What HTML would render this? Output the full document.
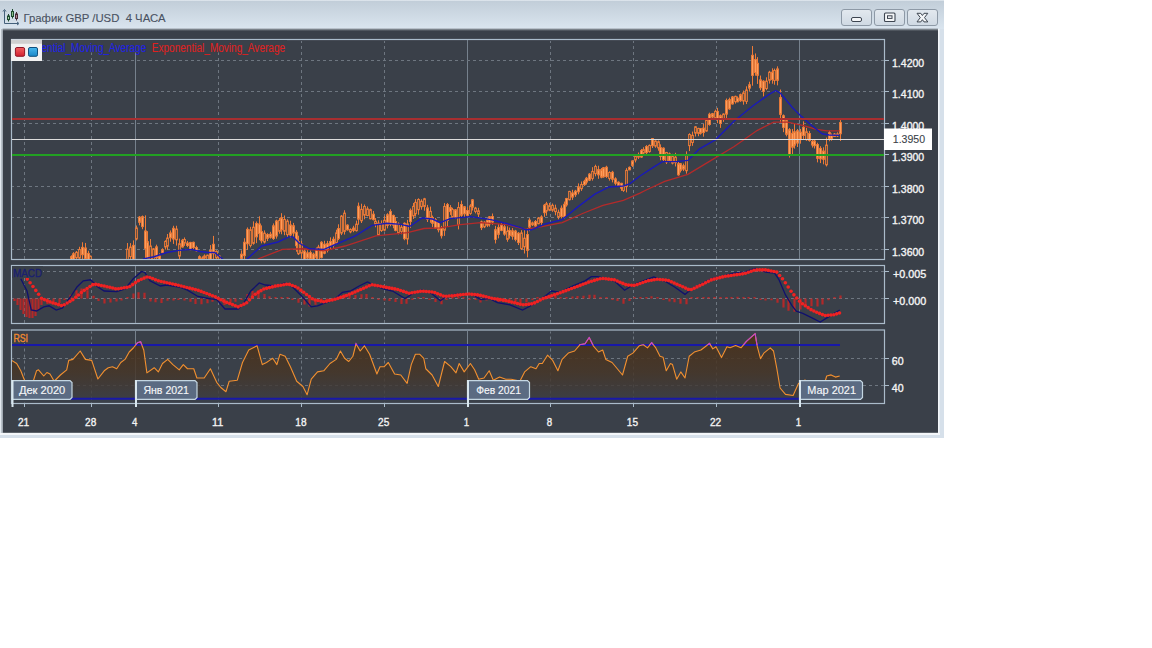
<!DOCTYPE html><html><head><meta charset="utf-8"><style>html,body{margin:0;padding:0;background:#fff;width:1152px;height:648px;overflow:hidden}svg{display:block;font-family:"Liberation Sans",sans-serif}</style></head><body>
<svg width="1152" height="648" viewBox="0 0 1152 648">
<defs><linearGradient id="tb" x1="0" y1="0" x2="0" y2="1"><stop offset="0" stop-color="#e8eef4"/><stop offset="0.05" stop-color="#c2ced9"/><stop offset="1" stop-color="#dae5ef"/></linearGradient><linearGradient id="btn" x1="0" y1="0" x2="0" y2="1"><stop offset="0" stop-color="#e3e9ef"/><stop offset="1" stop-color="#cfd9e3"/></linearGradient><linearGradient id="rsif" gradientUnits="userSpaceOnUse" x1="0" y1="333" x2="0" y2="399"><stop offset="0" stop-color="#4c3016" stop-opacity="0.88"/><stop offset="0.6" stop-color="#463628" stop-opacity="0.85"/><stop offset="1" stop-color="#3c3d42" stop-opacity="0.8"/></linearGradient><linearGradient id="sh" x1="0" y1="0" x2="0" y2="1"><stop offset="0" stop-color="#d6e0ea"/><stop offset="0.5" stop-color="#7a828a"/><stop offset="1" stop-color="#3a4049"/></linearGradient><linearGradient id="gr" x1="0" y1="0" x2="0" y2="1"><stop offset="0" stop-color="#f46060"/><stop offset="1" stop-color="#d02030"/></linearGradient><linearGradient id="gb" x1="0" y1="0" x2="0" y2="1"><stop offset="0" stop-color="#48b8ee"/><stop offset="1" stop-color="#1a86c6"/></linearGradient><clipPath id="cm"><rect x="12" y="40" width="872" height="219"/></clipPath><clipPath id="cmacd"><rect x="12" y="266" width="872" height="57"/></clipPath><clipPath id="crsi"><rect x="12" y="331" width="872" height="72"/></clipPath><clipPath id="cabove"><rect x="12" y="300" width="872" height="45"/></clipPath></defs>
<rect x="0" y="0" width="944" height="438" fill="#d6e0ea"/>
<rect x="0" y="0" width="944" height="29" fill="url(#tb)"/>
<rect x="2.6" y="28" width="935.4" height="3" fill="url(#sh)"/>
<rect x="2.6" y="31" width="935.4" height="402" fill="#3a4049"/>
<rect x="938" y="29" width="1.5" height="405" fill="#f4f7fa"/>
<rect x="0" y="432.8" width="940" height="2.2" fill="#f4f7fa"/>
<rect x="0" y="29" width="1.3" height="404" fill="#e4eaf0"/>
<rect x="1.3" y="29" width="1.3" height="404" fill="#aab2ba"/>
<g fill="none" stroke-width="1"><path d="M4.5 10.5 V23.5 H18" stroke="#44607a"/><path d="M3 11.5 L4.5 9.5 L6 11.5" stroke="#44607a"/><path d="M17 22 L19 23.5 L17 25" stroke="#44607a"/></g><line x1="8.5" y1="14" x2="8.5" y2="21.5" stroke="#1e4a2e"/><rect x="7.5" y="16" width="2" height="3.6" fill="#a8d0a8" stroke="#1e4a2e" stroke-width="1"/><line x1="12.5" y1="9" x2="12.5" y2="18.5" stroke="#1e4a2e"/><rect x="11.5" y="11.5" width="2" height="5" fill="#8cc08c" stroke="#1e4a2e" stroke-width="1"/><line x1="16.5" y1="12" x2="16.5" y2="20.5" stroke="#4a2a36"/><rect x="15.5" y="14" width="2" height="4.5" fill="#b08894" stroke="#4a2a36" stroke-width="1"/>
<text x="23.5" y="22" font-size="11.8" fill="#4a5262" textLength="142" lengthAdjust="spacingAndGlyphs" stroke="#4a5262" stroke-width="0.12">График GBP /USD&#160; 4 ЧАСА</text>
<rect x="841.5" y="9.5" width="30" height="16" rx="2.5" fill="url(#btn)" stroke="#8d99a6" stroke-width="1"/>
<rect x="874.5" y="9.5" width="30" height="16" rx="2.5" fill="url(#btn)" stroke="#8d99a6" stroke-width="1"/>
<rect x="907.5" y="9.5" width="30" height="16" rx="2.5" fill="url(#btn)" stroke="#8d99a6" stroke-width="1"/>
<rect x="851.5" y="17.5" width="10" height="4" rx="1.5" fill="#f4f6f8" stroke="#3d4550" stroke-width="1"/>
<rect x="884.5" y="13" width="10.5" height="8.5" rx="1" fill="#f4f6f8" stroke="#3d4550" stroke-width="1.1"/><rect x="887.5" y="15.8" width="4.5" height="2.6" fill="#f4f6f8" stroke="#3d4550" stroke-width="1"/>
<path d="M917 13.3 L920.8 13.3 L922.4 15.5 L924 13.3 L927.8 13.3 L924.5 17.6 L927.8 21.9 L924 21.9 L922.4 19.7 L920.8 21.9 L917 21.9 L920.3 17.6 Z" fill="#f4f6f8" stroke="#3d4550" stroke-width="1" stroke-linejoin="round"/>
<rect x="11.5" y="39.5" width="873" height="220" fill="none" stroke="#aabbca" stroke-width="1.2"/>
<rect x="11.5" y="265.5" width="873" height="58" fill="none" stroke="#aabbca" stroke-width="1.2"/>
<rect x="11.5" y="330" width="873" height="73.5" fill="none" stroke="#aabbca" stroke-width="1.2"/>
<line x1="24.5" y1="41" x2="24.5" y2="259" stroke="#6e7680" stroke-width="1" stroke-dasharray="3,3" stroke-dashoffset="1"/>
<line x1="24.5" y1="267" x2="24.5" y2="323" stroke="#6e7680" stroke-width="1" stroke-dasharray="3,3" stroke-dashoffset="1"/>
<line x1="24.5" y1="331.5" x2="24.5" y2="403" stroke="#6e7680" stroke-width="1" stroke-dasharray="3,3" stroke-dashoffset="1"/>
<line x1="91.5" y1="41" x2="91.5" y2="259" stroke="#6e7680" stroke-width="1" stroke-dasharray="3,3" stroke-dashoffset="1"/>
<line x1="91.5" y1="267" x2="91.5" y2="323" stroke="#6e7680" stroke-width="1" stroke-dasharray="3,3" stroke-dashoffset="1"/>
<line x1="91.5" y1="331.5" x2="91.5" y2="403" stroke="#6e7680" stroke-width="1" stroke-dasharray="3,3" stroke-dashoffset="1"/>
<line x1="135.5" y1="40" x2="135.5" y2="259" stroke="#76818d" stroke-width="1"/>
<line x1="135.5" y1="266" x2="135.5" y2="323" stroke="#76818d" stroke-width="1"/>
<line x1="135.5" y1="330.5" x2="135.5" y2="403" stroke="#76818d" stroke-width="1"/>
<line x1="218.5" y1="41" x2="218.5" y2="259" stroke="#6e7680" stroke-width="1" stroke-dasharray="3,3" stroke-dashoffset="1"/>
<line x1="218.5" y1="267" x2="218.5" y2="323" stroke="#6e7680" stroke-width="1" stroke-dasharray="3,3" stroke-dashoffset="1"/>
<line x1="218.5" y1="331.5" x2="218.5" y2="403" stroke="#6e7680" stroke-width="1" stroke-dasharray="3,3" stroke-dashoffset="1"/>
<line x1="301.5" y1="41" x2="301.5" y2="259" stroke="#6e7680" stroke-width="1" stroke-dasharray="3,3" stroke-dashoffset="1"/>
<line x1="301.5" y1="267" x2="301.5" y2="323" stroke="#6e7680" stroke-width="1" stroke-dasharray="3,3" stroke-dashoffset="1"/>
<line x1="301.5" y1="331.5" x2="301.5" y2="403" stroke="#6e7680" stroke-width="1" stroke-dasharray="3,3" stroke-dashoffset="1"/>
<line x1="384.5" y1="41" x2="384.5" y2="259" stroke="#6e7680" stroke-width="1" stroke-dasharray="3,3" stroke-dashoffset="1"/>
<line x1="384.5" y1="267" x2="384.5" y2="323" stroke="#6e7680" stroke-width="1" stroke-dasharray="3,3" stroke-dashoffset="1"/>
<line x1="384.5" y1="331.5" x2="384.5" y2="403" stroke="#6e7680" stroke-width="1" stroke-dasharray="3,3" stroke-dashoffset="1"/>
<line x1="467.5" y1="40" x2="467.5" y2="259" stroke="#76818d" stroke-width="1"/>
<line x1="467.5" y1="266" x2="467.5" y2="323" stroke="#76818d" stroke-width="1"/>
<line x1="467.5" y1="330.5" x2="467.5" y2="403" stroke="#76818d" stroke-width="1"/>
<line x1="550.5" y1="41" x2="550.5" y2="259" stroke="#6e7680" stroke-width="1" stroke-dasharray="3,3" stroke-dashoffset="1"/>
<line x1="550.5" y1="267" x2="550.5" y2="323" stroke="#6e7680" stroke-width="1" stroke-dasharray="3,3" stroke-dashoffset="1"/>
<line x1="550.5" y1="331.5" x2="550.5" y2="403" stroke="#6e7680" stroke-width="1" stroke-dasharray="3,3" stroke-dashoffset="1"/>
<line x1="633.5" y1="41" x2="633.5" y2="259" stroke="#6e7680" stroke-width="1" stroke-dasharray="3,3" stroke-dashoffset="1"/>
<line x1="633.5" y1="267" x2="633.5" y2="323" stroke="#6e7680" stroke-width="1" stroke-dasharray="3,3" stroke-dashoffset="1"/>
<line x1="633.5" y1="331.5" x2="633.5" y2="403" stroke="#6e7680" stroke-width="1" stroke-dasharray="3,3" stroke-dashoffset="1"/>
<line x1="716.5" y1="41" x2="716.5" y2="259" stroke="#6e7680" stroke-width="1" stroke-dasharray="3,3" stroke-dashoffset="1"/>
<line x1="716.5" y1="267" x2="716.5" y2="323" stroke="#6e7680" stroke-width="1" stroke-dasharray="3,3" stroke-dashoffset="1"/>
<line x1="716.5" y1="331.5" x2="716.5" y2="403" stroke="#6e7680" stroke-width="1" stroke-dasharray="3,3" stroke-dashoffset="1"/>
<line x1="799.5" y1="40" x2="799.5" y2="259" stroke="#76818d" stroke-width="1"/>
<line x1="799.5" y1="266" x2="799.5" y2="323" stroke="#76818d" stroke-width="1"/>
<line x1="799.5" y1="330.5" x2="799.5" y2="403" stroke="#76818d" stroke-width="1"/>
<line x1="12" y1="60.5" x2="884" y2="60.5" stroke="#6e7680" stroke-dasharray="3,3" stroke-dashoffset="1"/>
<line x1="884" y1="60.5" x2="889" y2="60.5" stroke="#aabbca"/>
<line x1="12" y1="91.5" x2="884" y2="91.5" stroke="#6e7680" stroke-dasharray="3,3" stroke-dashoffset="1"/>
<line x1="884" y1="91.5" x2="889" y2="91.5" stroke="#aabbca"/>
<line x1="12" y1="123.5" x2="884" y2="123.5" stroke="#6e7680" stroke-dasharray="3,3" stroke-dashoffset="1"/>
<line x1="884" y1="123.5" x2="889" y2="123.5" stroke="#aabbca"/>
<line x1="12" y1="154.5" x2="884" y2="154.5" stroke="#6e7680" stroke-dasharray="3,3" stroke-dashoffset="1"/>
<line x1="884" y1="154.5" x2="889" y2="154.5" stroke="#aabbca"/>
<line x1="12" y1="186.5" x2="884" y2="186.5" stroke="#6e7680" stroke-dasharray="3,3" stroke-dashoffset="1"/>
<line x1="884" y1="186.5" x2="889" y2="186.5" stroke="#aabbca"/>
<line x1="12" y1="217.5" x2="884" y2="217.5" stroke="#6e7680" stroke-dasharray="3,3" stroke-dashoffset="1"/>
<line x1="884" y1="217.5" x2="889" y2="217.5" stroke="#aabbca"/>
<line x1="12" y1="249.5" x2="884" y2="249.5" stroke="#6e7680" stroke-dasharray="3,3" stroke-dashoffset="1"/>
<line x1="884" y1="249.5" x2="889" y2="249.5" stroke="#aabbca"/>
<line x1="12" y1="271.5" x2="884" y2="271.5" stroke="#6e7680" stroke-dasharray="3,3" stroke-dashoffset="1"/>
<line x1="884" y1="271.5" x2="889" y2="271.5" stroke="#aabbca"/>
<line x1="12" y1="298.5" x2="884" y2="298.5" stroke="#6e7680" stroke-dasharray="3,3" stroke-dashoffset="1"/>
<line x1="884" y1="298.5" x2="889" y2="298.5" stroke="#aabbca"/>
<line x1="12" y1="358.5" x2="884" y2="358.5" stroke="#6e7680" stroke-dasharray="3,3" stroke-dashoffset="1"/>
<line x1="884" y1="358.5" x2="889" y2="358.5" stroke="#aabbca"/>
<line x1="12" y1="385.5" x2="884" y2="385.5" stroke="#6e7680" stroke-dasharray="3,3" stroke-dashoffset="1"/>
<line x1="884" y1="385.5" x2="889" y2="385.5" stroke="#aabbca"/>
<g clip-path="url(#cm)">
<path d="M71.5 255.29V260.42M73.5 252.15V261.61M76.5 251.02V259.89M79.5 246.79V261.2M82.5 242.25V261.3M85.5 242.95V261.29M88.5 250.78V261.96M90.5 255.52V261.6M127.5 243.02V263.09M130.5 243.13V261.39M133.5 240.4V261.17M136.5 225.51V240.44M139.5 216.07V225.31M142.5 215.49V229.22M145.5 215.38V261.88M147.5 231.17V261.98M150.5 239.06V262.08M153.5 248.05V261.01M156.5 244.68V261.96M159.5 253.41V261.56M162.5 248.35V253.39M165.5 240.22V249.55M167.5 234.03V249.79M170.5 230.46V241.73M173.5 225.78V243.94M176.5 225.75V245.58M179.5 238.63V261.52M182.5 238.9V247.6M184.5 237.45V245.83M187.5 240.95V247.08M190.5 241.85V250.14M193.5 241.61V249.35M196.5 245.71V251.6M199.5 255.34V261.08M202.5 256.39V261.72M204.5 254.38V259.26M207.5 254.71V261.94M210.5 245.08V261.54M213.5 235.92V261.23M216.5 250.28V261.24M219.5 254.97V261.26M241.5 250.43V261.91M244.5 238.22V261.21M247.5 227.44V249.87M250.5 226.85V247.41M253.5 221.37V244.68M256.5 221.47V243.13M259.5 216.28V240.16M261.5 225.4V243.34M264.5 230.38V243.41M267.5 233.21V241.03M270.5 231.85V238.59M273.5 223.43V239.89M276.5 219.69V238.67M279.5 217.87V233.67M281.5 213.19V234.29M284.5 215.48V235.21M287.5 219.26V237.06M290.5 220.74V237.6M293.5 222.9V237.22M296.5 230.07V251.7M298.5 235.69V254.97M301.5 240.93V258.42M304.5 249V261.7M307.5 250.28V261.61M310.5 250.51V260.23M313.5 252.68V261.75M316.5 247.53V260.2M318.5 244.84V261.16M321.5 241.18V258.43M324.5 240.74V254.27M327.5 240.87V252.44M330.5 237.36V249.47M333.5 236.62V247.71M336.5 229.69V244.91M338.5 224.31V240.09M341.5 215.04V235.1M344.5 210.26V234.58M347.5 224.27V230.62M350.5 228.37V233.28M353.5 225.78V232.2M356.5 220.59V231.55M358.5 202.59V224.74M361.5 203.71V223M364.5 204.47V219.27M367.5 206.47V216.26M370.5 208.61V219.37M373.5 211.04V220.44M375.5 218.06V227.26M378.5 220.25V235.77M381.5 220.39V231.95M384.5 215.92V231.34M387.5 213.24V228.4M390.5 209.25V226.26M393.5 214.55V228.3M395.5 217.05V231.34M398.5 222.41V234.34M401.5 224.03V234.29M404.5 222.38V240.23M407.5 219.83V244.51M410.5 208.48V227.82M413.5 202.95V218.94M415.5 199.19V216.56M418.5 198.31V214.75M421.5 199.25V209.66M424.5 197.86V210.71M427.5 204.87V222.03M430.5 206.59V222.75M432.5 215.57V226.98M435.5 218V228.68M438.5 221.91V232.39M441.5 225.85V238.5M444.5 203.08V235.91M447.5 202.96V227.04M450.5 205.08V214.94M452.5 207.79V217.76M455.5 209.13V218.66M458.5 202.12V229.38M461.5 200.67V216.85M464.5 205.97V217.09M467.5 207.21V216.67M470.5 204.17V214.78M472.5 199.17V210.5M475.5 206.82V213.39M478.5 207.8V216.99M481.5 220.61V230.09M484.5 221.31V228.12M487.5 218.19V227.06M489.5 216.15V226.67M492.5 213.53V224.77M495.5 225.87V243.44M498.5 224.06V238.39M501.5 223.11V231.22M504.5 222.87V235.74M507.5 226.33V241.75M509.5 227.55V238.67M512.5 228.05V239.68M515.5 229.86V241.33M518.5 232.07V245.06M521.5 230.21V249.88M524.5 230.15V253.5M527.5 228.23V257.38M529.5 218.16V231.2M532.5 221.61V226.01M535.5 220.02V226.58M538.5 217.03V224.2M541.5 215.27V225.25M544.5 203.94V216.91M546.5 201.86V215.67M549.5 202.93V211.1M552.5 203.49V211.84M555.5 204.66V215.29M558.5 209.62V219.37M561.5 205.46V218.36M564.5 201.55V218.86M566.5 197.84V206.7M569.5 190.8V200.38M572.5 189.77V199.88M575.5 189.85V196.93M578.5 183.4V194.27M581.5 181.5V190.92M584.5 179.66V185.9M586.5 176.92V184.56M589.5 173.03V181.01M592.5 167.19V180.61M595.5 164.7V176.32M598.5 165.74V178.8M601.5 168V178.28M603.5 167.12V177.78M606.5 165.76V177.97M609.5 171.26V180.64M612.5 170.85V182.38M615.5 177.26V185.39M618.5 181.34V186.63M621.5 182.77V190.86M623.5 185.03V191.88M626.5 168.19V192.35M629.5 166.46V170.16M632.5 160.35V167.02M635.5 154.37V162.39M638.5 152.52V158.96M641.5 148.95V157.78M643.5 147.26V155.78M646.5 145.13V154.1M649.5 144.48V152.7M652.5 138.01V148.03M655.5 140.25V147.82M658.5 140.44V150.71M660.5 144.34V160.27M663.5 147.27V161.01M666.5 151.89V164.01M669.5 152.5V162.31M672.5 153.84V164.42M675.5 152.82V166.43M678.5 161.27V175.71M680.5 163.25V172.54M683.5 163.6V171.08M686.5 151.35V173.65M689.5 133.24V151.07M692.5 131.58V145.8M695.5 125.97V136.53M698.5 127.78V136.21M700.5 128V134.61M703.5 123.87V136.66M706.5 119.47V131.68M709.5 112.7V125.67M712.5 112.9V119.23M715.5 109.62V118.62M717.5 107.87V123.12M720.5 114.46V127.88M723.5 113.31V121.85M726.5 98.53V117.99M729.5 97.66V109.79M732.5 96.06V104.55M735.5 95.66V103.59M737.5 96.43V102.22M740.5 93.63V101.86M743.5 90.57V104.7M746.5 86.33V104.07M749.5 81.73V90.95M752.5 46.04V85.7M755.5 53.45V75.67M757.5 57.13V83.95M760.5 75.55V90.25M763.5 80.23V96.35M766.5 77.3V90.18M769.5 70.83V83.58M772.5 68.32V83.67M774.5 68.62V84.72M777.5 66.34V85.4M780.5 89.53V122.86M783.5 114.46V132.17M786.5 119.2V136.33M789.5 128.1V157.59M792.5 128.95V154.41M794.5 123.47V148.61M797.5 128.97V147M800.5 128.94V143.66M803.5 121.34V139.1M806.5 127.83V140.8M809.5 131.05V141.65M812.5 139.04V147.55M814.5 139.77V148.52M817.5 142.74V162.38M820.5 146.19V163.07M823.5 147.33V164.3M826.5 137.54V166.44M829.5 130.74V141.28M831.5 133.47V140.72M834.5 133.04V137.03M837.5 132.32V137.03M840.5 120.04V140.98" stroke="#ee7a36" stroke-width="1" fill="none"/>
<g fill="#ffa262" stroke="#f07c38" stroke-width="0.9"><rect x="70.6" y="256.58" width="1.8" height="3.42"/><rect x="72.6" y="253.67" width="1.8" height="6.73"/><rect x="81.6" y="247.3" width="1.8" height="7.45"/><rect x="84.6" y="247.94" width="1.8" height="11.49"/><rect x="87.6" y="253.34" width="1.8" height="7.23"/><rect x="132.6" y="245.29" width="1.8" height="14.74"/><rect x="138.6" y="217.08" width="1.8" height="5.28"/><rect x="141.6" y="216.59" width="1.8" height="10.08"/><rect x="144.6" y="230.89" width="1.8" height="17.61"/><rect x="146.6" y="241.58" width="1.8" height="17.38"/><rect x="155.6" y="246.79" width="1.8" height="10.99"/><rect x="158.6" y="255.93" width="1.8" height="4.01"/><rect x="161.6" y="249.81" width="1.8" height="2.88"/><rect x="169.6" y="232.91" width="1.8" height="4.92"/><rect x="172.6" y="228.24" width="1.8" height="10.84"/><rect x="181.6" y="240.25" width="1.8" height="6.78"/><rect x="186.6" y="242.97" width="1.8" height="2.59"/><rect x="189.6" y="242.41" width="1.8" height="7.25"/><rect x="192.6" y="242.27" width="1.8" height="5.3"/><rect x="195.6" y="247.46" width="1.8" height="3.34"/><rect x="198.6" y="256.64" width="1.8" height="2.58"/><rect x="209.6" y="250.4" width="1.8" height="9.07"/><rect x="212.6" y="244.22" width="1.8" height="9.49"/><rect x="240.6" y="254.13" width="1.8" height="4.27"/><rect x="243.6" y="242.18" width="1.8" height="13.52"/><rect x="246.6" y="229.29" width="1.8" height="14.55"/><rect x="255.6" y="223.39" width="1.8" height="13.54"/><rect x="258.6" y="223.9" width="1.8" height="9.77"/><rect x="260.6" y="231.44" width="1.8" height="9.43"/><rect x="266.6" y="234.49" width="1.8" height="3.9"/><rect x="269.6" y="234.15" width="1.8" height="3.2"/><rect x="272.6" y="225.77" width="1.8" height="12.84"/><rect x="275.6" y="220.92" width="1.8" height="15.17"/><rect x="280.6" y="217.71" width="1.8" height="12.19"/><rect x="289.6" y="224.93" width="1.8" height="10.12"/><rect x="292.6" y="225.69" width="1.8" height="7.45"/><rect x="295.6" y="232.19" width="1.8" height="13.6"/><rect x="303.6" y="251" width="1.8" height="9.22"/><rect x="306.6" y="252.82" width="1.8" height="5.3"/><rect x="309.6" y="252.55" width="1.8" height="6.31"/><rect x="312.6" y="254.1" width="1.8" height="6.61"/><rect x="315.6" y="248.96" width="1.8" height="8.36"/><rect x="320.6" y="242.19" width="1.8" height="15.33"/><rect x="323.6" y="244.15" width="1.8" height="9.15"/><rect x="326.6" y="243.63" width="1.8" height="6.64"/><rect x="329.6" y="241.5" width="1.8" height="4.42"/><rect x="332.6" y="239.21" width="1.8" height="6.18"/><rect x="337.6" y="228.43" width="1.8" height="10.06"/><rect x="346.6" y="225.06" width="1.8" height="4.84"/><rect x="352.6" y="228.01" width="1.8" height="2.43"/><rect x="357.6" y="206.15" width="1.8" height="13.06"/><rect x="372.6" y="214.16" width="1.8" height="5.49"/><rect x="386.6" y="214.7" width="1.8" height="10.67"/><rect x="389.6" y="211.41" width="1.8" height="13.13"/><rect x="392.6" y="215.39" width="1.8" height="9.79"/><rect x="394.6" y="221.45" width="1.8" height="9.06"/><rect x="403.6" y="223.28" width="1.8" height="15.46"/><rect x="409.6" y="210.28" width="1.8" height="11.32"/><rect x="426.6" y="207.86" width="1.8" height="11.47"/><rect x="431.6" y="217.55" width="1.8" height="5.79"/><rect x="434.6" y="219.63" width="1.8" height="8.5"/><rect x="437.6" y="222.54" width="1.8" height="7.29"/><rect x="440.6" y="228.11" width="1.8" height="7.69"/><rect x="446.6" y="204.41" width="1.8" height="16.18"/><rect x="449.6" y="207.58" width="1.8" height="4.05"/><rect x="454.6" y="209.8" width="1.8" height="7.71"/><rect x="460.6" y="204.45" width="1.8" height="10.87"/><rect x="463.6" y="206.71" width="1.8" height="7.16"/><rect x="466.6" y="210.5" width="1.8" height="5.01"/><rect x="471.6" y="199.79" width="1.8" height="7.43"/><rect x="480.6" y="221.83" width="1.8" height="5.86"/><rect x="486.6" y="219.95" width="1.8" height="5.26"/><rect x="488.6" y="216.75" width="1.8" height="7.19"/><rect x="491.6" y="216.51" width="1.8" height="5.59"/><rect x="494.6" y="229.66" width="1.8" height="9.86"/><rect x="497.6" y="227.33" width="1.8" height="7.03"/><rect x="500.6" y="224.89" width="1.8" height="5.59"/><rect x="503.6" y="226.8" width="1.8" height="7.34"/><rect x="508.6" y="230.38" width="1.8" height="5.27"/><rect x="511.6" y="230.77" width="1.8" height="5.55"/><rect x="514.6" y="230.96" width="1.8" height="8.5"/><rect x="517.6" y="233.18" width="1.8" height="9.45"/><rect x="526.6" y="234.51" width="1.8" height="15.88"/><rect x="528.6" y="220.08" width="1.8" height="7.04"/><rect x="534.6" y="221.48" width="1.8" height="4.58"/><rect x="540.6" y="216.89" width="1.8" height="5.68"/><rect x="543.6" y="205.13" width="1.8" height="7.59"/><rect x="560.6" y="208.13" width="1.8" height="8.47"/><rect x="563.6" y="204.25" width="1.8" height="12.37"/><rect x="565.6" y="198.44" width="1.8" height="6.52"/><rect x="571.6" y="192.89" width="1.8" height="4.24"/><rect x="574.6" y="191.08" width="1.8" height="3.67"/><rect x="577.6" y="186.77" width="1.8" height="5.1"/><rect x="583.6" y="181.29" width="1.8" height="3.49"/><rect x="585.6" y="178.14" width="1.8" height="4.01"/><rect x="588.6" y="174.05" width="1.8" height="6.17"/><rect x="597.6" y="169.56" width="1.8" height="5.36"/><rect x="600.6" y="169.59" width="1.8" height="7.62"/><rect x="602.6" y="167.67" width="1.8" height="9.16"/><rect x="605.6" y="167.17" width="1.8" height="9.4"/><rect x="611.6" y="172.19" width="1.8" height="7.1"/><rect x="614.6" y="178.83" width="1.8" height="4.47"/><rect x="617.6" y="182.16" width="1.8" height="3.98"/><rect x="620.6" y="183.28" width="1.8" height="4.98"/><rect x="628.6" y="167.29" width="1.8" height="2.63"/><rect x="631.6" y="160.9" width="1.8" height="4.54"/><rect x="640.6" y="150.41" width="1.8" height="6.69"/><rect x="645.6" y="146.53" width="1.8" height="6.17"/><rect x="651.6" y="138.54" width="1.8" height="7.19"/><rect x="659.6" y="147.55" width="1.8" height="8.98"/><rect x="662.6" y="148.12" width="1.8" height="11.58"/><rect x="668.6" y="153.85" width="1.8" height="6.96"/><rect x="677.6" y="163.7" width="1.8" height="11.21"/><rect x="679.6" y="163.72" width="1.8" height="6.72"/><rect x="682.6" y="165.69" width="1.8" height="3.48"/><rect x="699.6" y="128.5" width="1.8" height="4.77"/><rect x="702.6" y="128.08" width="1.8" height="4.51"/><rect x="708.6" y="114.16" width="1.8" height="10.41"/><rect x="711.6" y="113.62" width="1.8" height="3.47"/><rect x="716.6" y="111.38" width="1.8" height="7.64"/><rect x="719.6" y="115.68" width="1.8" height="7.91"/><rect x="725.6" y="100.36" width="1.8" height="13.81"/><rect x="728.6" y="99.57" width="1.8" height="9.36"/><rect x="731.6" y="96.87" width="1.8" height="7.15"/><rect x="736.6" y="98.07" width="1.8" height="3.81"/><rect x="739.6" y="94.68" width="1.8" height="6.13"/><rect x="748.6" y="84.72" width="1.8" height="3.47"/><rect x="751.6" y="55.26" width="1.8" height="20.2"/><rect x="754.6" y="59.54" width="1.8" height="13.04"/><rect x="756.6" y="63.22" width="1.8" height="12.15"/><rect x="759.6" y="79.84" width="1.8" height="7.95"/><rect x="762.6" y="81.16" width="1.8" height="10.37"/><rect x="771.6" y="72.14" width="1.8" height="7.48"/><rect x="776.6" y="68.89" width="1.8" height="11.46"/><rect x="779.6" y="97.57" width="1.8" height="16.85"/><rect x="782.6" y="115.68" width="1.8" height="11.85"/><rect x="785.6" y="120.59" width="1.8" height="13.74"/><rect x="788.6" y="129.68" width="1.8" height="25.26"/><rect x="791.6" y="133.23" width="1.8" height="13.99"/><rect x="793.6" y="131.72" width="1.8" height="13.49"/><rect x="796.6" y="130.72" width="1.8" height="12.39"/><rect x="799.6" y="132.13" width="1.8" height="7.53"/><rect x="802.6" y="127.25" width="1.8" height="8.31"/><rect x="808.6" y="133.49" width="1.8" height="7.1"/><rect x="811.6" y="141.39" width="1.8" height="3.68"/><rect x="813.6" y="140.96" width="1.8" height="4.79"/><rect x="816.6" y="144.45" width="1.8" height="13.93"/><rect x="819.6" y="148.32" width="1.8" height="10.58"/><rect x="822.6" y="150.98" width="1.8" height="8.36"/><rect x="828.6" y="132.59" width="1.8" height="6.83"/><rect x="830.6" y="135.13" width="1.8" height="3.64"/><rect x="839.6" y="122.51" width="1.8" height="11.29"/></g>
<g fill="#5a4a42" stroke="#f07c38" stroke-width="0.9"><rect x="75.6" y="252.26" width="1.8" height="5.48"/><rect x="78.6" y="249.52" width="1.8" height="8.63"/><rect x="89.6" y="256.15" width="1.8" height="3.97"/><rect x="126.6" y="249.05" width="1.8" height="10.69"/><rect x="129.6" y="247.05" width="1.8" height="9.6"/><rect x="135.6" y="227.91" width="1.8" height="11.11"/><rect x="149.6" y="245.96" width="1.8" height="13.71"/><rect x="152.6" y="248.82" width="1.8" height="10.92"/><rect x="164.6" y="241.37" width="1.8" height="5.64"/><rect x="166.6" y="238" width="1.8" height="8.17"/><rect x="175.6" y="229" width="1.8" height="10.89"/><rect x="178.6" y="243.69" width="1.8" height="12.41"/><rect x="183.6" y="239.52" width="1.8" height="3.58"/><rect x="201.6" y="258" width="1.8" height="2.91"/><rect x="203.6" y="255.93" width="1.8" height="2.09"/><rect x="206.6" y="255.14" width="1.8" height="5.85"/><rect x="215.6" y="251.33" width="1.8" height="6.57"/><rect x="218.6" y="256.04" width="1.8" height="3.46"/><rect x="249.6" y="229.7" width="1.8" height="15.78"/><rect x="252.6" y="227.16" width="1.8" height="16.24"/><rect x="263.6" y="233.09" width="1.8" height="8.95"/><rect x="278.6" y="220.38" width="1.8" height="10.98"/><rect x="283.6" y="219.5" width="1.8" height="11.77"/><rect x="286.6" y="221.05" width="1.8" height="13.62"/><rect x="297.6" y="241.44" width="1.8" height="12.37"/><rect x="300.6" y="243.9" width="1.8" height="9.24"/><rect x="317.6" y="247.09" width="1.8" height="13.2"/><rect x="335.6" y="232.84" width="1.8" height="10.39"/><rect x="340.6" y="216.05" width="1.8" height="17.08"/><rect x="343.6" y="213.09" width="1.8" height="18.34"/><rect x="349.6" y="229.42" width="1.8" height="2.5"/><rect x="355.6" y="224.08" width="1.8" height="6.63"/><rect x="360.6" y="209.29" width="1.8" height="11.53"/><rect x="363.6" y="206.52" width="1.8" height="8.64"/><rect x="366.6" y="208.87" width="1.8" height="6.69"/><rect x="369.6" y="209.57" width="1.8" height="9.25"/><rect x="374.6" y="221.21" width="1.8" height="3.03"/><rect x="377.6" y="223.12" width="1.8" height="11.81"/><rect x="380.6" y="223.49" width="1.8" height="7.08"/><rect x="383.6" y="220.24" width="1.8" height="9.91"/><rect x="397.6" y="223.95" width="1.8" height="9.02"/><rect x="400.6" y="227.2" width="1.8" height="4.29"/><rect x="406.6" y="223.87" width="1.8" height="15.16"/><rect x="412.6" y="206.33" width="1.8" height="9.58"/><rect x="414.6" y="202.32" width="1.8" height="11.42"/><rect x="417.6" y="199.51" width="1.8" height="10.22"/><rect x="420.6" y="201.22" width="1.8" height="5.58"/><rect x="423.6" y="198.76" width="1.8" height="7.67"/><rect x="429.6" y="211.31" width="1.8" height="6.48"/><rect x="443.6" y="206.37" width="1.8" height="23.88"/><rect x="451.6" y="209.55" width="1.8" height="7.68"/><rect x="457.6" y="207.43" width="1.8" height="17.18"/><rect x="469.6" y="205.86" width="1.8" height="7.64"/><rect x="474.6" y="208.06" width="1.8" height="3.46"/><rect x="477.6" y="210.77" width="1.8" height="3.34"/><rect x="483.6" y="222.16" width="1.8" height="4.68"/><rect x="506.6" y="231.2" width="1.8" height="8.16"/><rect x="520.6" y="232.87" width="1.8" height="15.92"/><rect x="523.6" y="238.16" width="1.8" height="8.76"/><rect x="531.6" y="222.87" width="1.8" height="2"/><rect x="537.6" y="218.07" width="1.8" height="5.69"/><rect x="545.6" y="203.71" width="1.8" height="7.34"/><rect x="548.6" y="205.64" width="1.8" height="4.43"/><rect x="551.6" y="205.26" width="1.8" height="4.98"/><rect x="554.6" y="208.18" width="1.8" height="3.49"/><rect x="557.6" y="212.26" width="1.8" height="4.79"/><rect x="568.6" y="191.4" width="1.8" height="8.38"/><rect x="580.6" y="184.42" width="1.8" height="4.3"/><rect x="591.6" y="171.4" width="1.8" height="7.09"/><rect x="594.6" y="166.5" width="1.8" height="7.22"/><rect x="608.6" y="172.47" width="1.8" height="6.07"/><rect x="622.6" y="186.53" width="1.8" height="4.01"/><rect x="625.6" y="170.33" width="1.8" height="16.33"/><rect x="634.6" y="155.9" width="1.8" height="4.12"/><rect x="637.6" y="154.64" width="1.8" height="2.51"/><rect x="642.6" y="149.56" width="1.8" height="3.44"/><rect x="648.6" y="145.39" width="1.8" height="6.26"/><rect x="654.6" y="141.03" width="1.8" height="5.15"/><rect x="657.6" y="141.67" width="1.8" height="6.27"/><rect x="665.6" y="152.52" width="1.8" height="9.46"/><rect x="671.6" y="156.39" width="1.8" height="6.74"/><rect x="674.6" y="157.12" width="1.8" height="5.57"/><rect x="685.6" y="155.05" width="1.8" height="15.71"/><rect x="688.6" y="134.51" width="1.8" height="11.16"/><rect x="691.6" y="135.26" width="1.8" height="7.32"/><rect x="694.6" y="126.74" width="1.8" height="6.4"/><rect x="697.6" y="128.39" width="1.8" height="5.01"/><rect x="705.6" y="120.25" width="1.8" height="10.8"/><rect x="714.6" y="111.29" width="1.8" height="6.79"/><rect x="722.6" y="114.07" width="1.8" height="4.82"/><rect x="734.6" y="96.34" width="1.8" height="5.33"/><rect x="742.6" y="92.86" width="1.8" height="8.17"/><rect x="745.6" y="89.93" width="1.8" height="11.53"/><rect x="765.6" y="81.09" width="1.8" height="7.48"/><rect x="768.6" y="72.18" width="1.8" height="8.12"/><rect x="773.6" y="70.5" width="1.8" height="9.95"/><rect x="805.6" y="131.76" width="1.8" height="7.95"/><rect x="825.6" y="145.05" width="1.8" height="19.8"/><rect x="833.6" y="133.99" width="1.8" height="2.58"/><rect x="836.6" y="133.92" width="1.8" height="2"/></g>
<polyline points="255,262 258.5,258.75 282.5,249.4 303,248.75 324,250.8 345,246 376,235.8 407.5,232.7 424,228.5 440,227.8 460.4,224.7 480.7,222.7 507.2,224.7 525.5,229.4 541.8,226.7 562.2,222.7 582.6,213.5 602.9,205.4 623.3,200.3 640,193.1 646.2,190 664.7,181.3 687.9,174.3 711.1,160.4 734.2,146.5 757.4,130.3 773.6,122.2 787.5,122.2 803.7,125.7 815.3,129.2 826.9,130.8 839.6,130.8" fill="none" stroke="#b42a2a" stroke-width="1.3"/>
<polyline points="143,259 154,256.7 166.7,252.5 179,250.4 191.7,249.4 200,251.5 208,252.5 214.6,252.5 221,257.7 226,262" fill="none" stroke="#1a1ab8" stroke-width="1.4"/>
<polyline points="245,262 247,259 261.7,246 278,242 288.75,236.9 293,236.9 299,243 309.6,248.75 324,249.4 336.7,244 355.4,235.8 372,225.4 386.7,223.3 401,224.4 409.6,226.5 422,218 432.5,219 440,222.7 450.2,218.6 470.5,216.6 490.9,219.6 507.2,223.7 521.5,227.8 525.5,229.8 531.6,229.8 545.9,223.7 562.2,219.6 578.5,206.4 594.8,194.2 609,187 623.3,186 630,183.6 640,176 653.2,167.4 662.4,161.6 676.3,161.6 687.9,160.4 699.5,148.8 715.7,139.6 734.2,121 752.7,106 769,94.4 775.9,90.5 780.5,93.3 792.1,107.2 801.4,116.4 810.6,124.5 822.2,133.8 829.2,135 839.6,135.4" fill="none" stroke="#1a1ab8" stroke-width="1.4"/>
</g>
<line x1="12" y1="119" x2="884" y2="119" stroke="#a82e30" stroke-width="2"/>
<line x1="12" y1="139.5" x2="884" y2="139.5" stroke="#dcdcdc" stroke-width="1"/>
<line x1="12" y1="155" x2="884" y2="155" stroke="#22a022" stroke-width="2"/>
<text x="892" y="66.8" font-size="10.8" fill="#f4f4f4" textLength="32.2" lengthAdjust="spacingAndGlyphs" stroke="#f4f4f4" stroke-width="0.35">1.4200</text>
<text x="892" y="97.8" font-size="10.8" fill="#f4f4f4" textLength="32.2" lengthAdjust="spacingAndGlyphs" stroke="#f4f4f4" stroke-width="0.35">1.4100</text>
<text x="892" y="129.8" font-size="10.8" fill="#f4f4f4" textLength="32.2" lengthAdjust="spacingAndGlyphs" stroke="#f4f4f4" stroke-width="0.35">1.4000</text>
<text x="892" y="160.8" font-size="10.8" fill="#f4f4f4" textLength="32.2" lengthAdjust="spacingAndGlyphs" stroke="#f4f4f4" stroke-width="0.35">1.3900</text>
<text x="892" y="192.8" font-size="10.8" fill="#f4f4f4" textLength="32.2" lengthAdjust="spacingAndGlyphs" stroke="#f4f4f4" stroke-width="0.35">1.3800</text>
<text x="892" y="223.8" font-size="10.8" fill="#f4f4f4" textLength="32.2" lengthAdjust="spacingAndGlyphs" stroke="#f4f4f4" stroke-width="0.35">1.3700</text>
<text x="892" y="255.8" font-size="10.8" fill="#f4f4f4" textLength="32.2" lengthAdjust="spacingAndGlyphs" stroke="#f4f4f4" stroke-width="0.35">1.3600</text>
<rect x="884" y="128.5" width="48" height="21.5" fill="#ffffff"/>
<text x="892.8" y="142.9" font-size="10.8" fill="#3a3f48" textLength="32.3" lengthAdjust="spacingAndGlyphs" stroke="#3a3f48" stroke-width="0.1">1.3950</text>
<rect x="12" y="40" width="275" height="12.5" fill="#3a4049"/>
<text x="13" y="51.9" font-size="12" fill="#2020e8" textLength="133.3" lengthAdjust="spacingAndGlyphs" stroke="#2020e8" stroke-width="0.05">Exponential_Moving_Average</text>
<text x="151.8" y="51.9" font-size="12" fill="#e02020" textLength="133.3" lengthAdjust="spacingAndGlyphs" stroke="#e02020" stroke-width="0.05">Exponential_Moving_Average</text>
<rect x="11" y="39.5" width="31" height="21.5" fill="#f2f2f2"/>
<rect x="11" y="40" width="31" height="3.8" fill="#d0d0d0"/>
<rect x="15.4" y="47.5" width="9.2" height="8.8" rx="1.5" fill="url(#gr)" stroke="#901828" stroke-width="1"/>
<rect x="28.5" y="47.5" width="9" height="8.8" rx="1.5" fill="url(#gb)" stroke="#10507e" stroke-width="1"/>
<g clip-path="url(#cmacd)">
<path d="M47.5 298.5V303.93M53.5 298.5V303.59M59.5 298.5V303.1M64.5 298.5V300M70.5 298.5V294.78M76.5 298.5V290.21M81.5 298.5V288.6M87.5 298.5V290.32M93.5 298.5V295.83M98.5 298.5V300.97M104.5 298.5V303.5M110.5 298.5V302.45M116.5 298.5V301.4M121.5 298.5V300.44M127.5 298.5V297M133.5 298.5V293.41M138.5 298.5V292.22M144.5 298.5V292.65M150.5 298.5V301.53M155.5 298.5V302.35M161.5 298.5V302.92M167.5 298.5V300.8M173.5 298.5V300.43M178.5 298.5V300.03M184.5 298.5V300.61M190.5 298.5V301.87M195.5 298.5V303.91M201.5 298.5V304.21M207.5 298.5V303.15M212.5 298.5V301.84M218.5 298.5V301.5M224.5 298.5V305.1M230.5 298.5V304M235.5 298.5V301.77M241.5 298.5V300M247.5 298.5V293.88M252.5 298.5V290.98M258.5 298.5V290.09M264.5 298.5V293.91M269.5 298.5V296.28M275.5 298.5V297M281.5 298.5V297M287.5 298.5V297M292.5 298.5V300M298.5 298.5V302.86M304.5 298.5V304.44M309.5 298.5V306.6M315.5 298.5V304.76M321.5 298.5V301.96M327.5 298.5V300M332.5 298.5V300M338.5 298.5V296.49M344.5 298.5V294.16M349.5 298.5V295.25M355.5 298.5V294.95M361.5 298.5V294.23M366.5 298.5V293.97M372.5 298.5V297M378.5 298.5V300M384.5 298.5V300.57M389.5 298.5V300.9M395.5 298.5V302.06M401.5 298.5V303.88M406.5 298.5V303.84M412.5 298.5V300M418.5 298.5V297M423.5 298.5V297M429.5 298.5V300M435.5 298.5V302.09M441.5 298.5V304.19M446.5 298.5V300M452.5 298.5V297M458.5 298.5V297M463.5 298.5V297M469.5 298.5V300M475.5 298.5V300M480.5 298.5V302.44M486.5 298.5V300.58M492.5 298.5V300.12M498.5 298.5V302.03M503.5 298.5V302M509.5 298.5V301.74M515.5 298.5V302.4M520.5 298.5V303.34M526.5 298.5V302.28M532.5 298.5V300M537.5 298.5V297M543.5 298.5V297M549.5 298.5V295.01M555.5 298.5V295.16M560.5 298.5V297M566.5 298.5V297M572.5 298.5V296.4M577.5 298.5V296.03M583.5 298.5V295.85M589.5 298.5V294.78M594.5 298.5V294.8M600.5 298.5V297M606.5 298.5V297M612.5 298.5V300M617.5 298.5V300.96M623.5 298.5V303.74M629.5 298.5V301.1M634.5 298.5V297M640.5 298.5V297M646.5 298.5V296.96M651.5 298.5V296.15M657.5 298.5V297M663.5 298.5V300M669.5 298.5V301.38M674.5 298.5V302.26M680.5 298.5V303.75M686.5 298.5V304.3M691.5 298.5V297M697.5 298.5V297M703.5 298.5V297M708.5 298.5V297M714.5 298.5V297M720.5 298.5V297M726.5 298.5V297M731.5 298.5V296.88M737.5 298.5V296.69M743.5 298.5V296.93M748.5 298.5V297M754.5 298.5V297M760.5 298.5V300M765.5 298.5V300.5M771.5 298.5V300.31M777.5 298.5V302.85M783.5 298.5V307.62M788.5 298.5V310.86M794.5 298.5V311.79M800.5 298.5V309.51M805.5 298.5V307.37M811.5 298.5V306.29M817.5 298.5V306.57M822.5 298.5V304.52M828.5 298.5V300.34M834.5 298.5V297M840.5 298.5V295.6M14.5 298.5V301M17.5 298.5V305M20.5 298.5V310M23.5 298.5V314M26.5 298.5V317M29.5 298.5V318M32.5 298.5V318M35.5 298.5V316M38.5 298.5V310M41.5 298.5V305" stroke="#c02626" stroke-width="2.2" fill="none" opacity="0.9"/>
<polyline points="20.8,278.75 27,291 31.25,310 36.5,311 43.75,306.9 49,305.8 56.25,310 62.5,308 70.8,296.5 77,287 83.3,280.8 90.6,279.8 97.9,287 104.2,291 116.7,291.7 125,289 133.3,278.75 141.7,271.5 144.8,272.5 150,280.8 160.4,286 166.7,285 179.2,287 187.5,290.2 197.9,296.5 208.3,298.5 216.7,299.6 225,309 238.3,309 244.6,301.7 250.8,291 259.2,283 265.4,285 275.8,286 284.2,283.3 290.4,285 296.7,291 305,299.6 311.25,306.9 317.5,305.8 325.8,302.7 334.2,299.6 342.5,292.3 350.8,290.8 359.2,286 367.5,281.9 375.8,286 384.2,289.2 392.5,291 405,298.5 413.3,293.3 421.7,290.2 430,292.3 440.4,300.6 446.7,296.5 455,294.4 472.5,294.4 480.8,299.6 489.2,298.5 497.5,302.7 510,304.8 522.5,310 530.8,305.8 543.3,297.5 551.7,291 560,292.3 572.5,286 585,280.8 591.25,276.7 597.5,276.7 605.8,278.75 614.2,280.8 624.6,290.2 632.9,285 643.3,280.8 653.75,277 664.2,280.8 674.6,287 685,294.4 691.25,289.2 700.9,284 711.7,278.6 722.6,276.4 733.4,273.2 744.3,272.1 755.1,268.4 766,272.1 774.6,273.2 779,279.7 785.5,294.9 792,305.7 796.3,311.2 802.8,313.3 811.5,317.7 820.2,322 828.9,316.6 839.7,310" fill="none" stroke="#10106e" stroke-width="1.3"/>
<g fill="#f02222"><circle cx="27.25" cy="279.08" r="1.8"/><circle cx="30.1" cy="282.81" r="1.8"/><circle cx="32.95" cy="286.54" r="1.8"/><circle cx="35.8" cy="290.42" r="1.8"/><circle cx="38.65" cy="294.32" r="1.8"/><circle cx="41.5" cy="298.23" r="1.8"/><circle cx="44.35" cy="299.58" r="1.8"/><circle cx="47.2" cy="300.74" r="1.8"/><circle cx="50.05" cy="301.9" r="1.8"/><circle cx="52.9" cy="302.97" r="1.8"/><circle cx="55.75" cy="303.81" r="1.8"/><circle cx="58.6" cy="304.65" r="1.8"/><circle cx="61.45" cy="305.49" r="1.8"/><circle cx="64.3" cy="304.73" r="1.8"/><circle cx="67.15" cy="303.03" r="1.8"/><circle cx="70" cy="301.33" r="1.8"/><circle cx="72.85" cy="299.63" r="1.8"/><circle cx="75.7" cy="297.28" r="1.8"/><circle cx="78.55" cy="294.93" r="1.8"/><circle cx="81.4" cy="292.57" r="1.8"/><circle cx="84.25" cy="290.36" r="1.8"/><circle cx="87.1" cy="288.45" r="1.8"/><circle cx="89.95" cy="286.55" r="1.8"/><circle cx="92.8" cy="284.64" r="1.8"/><circle cx="95.65" cy="284.36" r="1.8"/><circle cx="98.5" cy="284.91" r="1.8"/><circle cx="101.35" cy="285.45" r="1.8"/><circle cx="104.2" cy="286" r="1.8"/><circle cx="107.05" cy="286.68" r="1.8"/><circle cx="109.9" cy="287.37" r="1.8"/><circle cx="112.75" cy="288.05" r="1.8"/><circle cx="115.6" cy="288.74" r="1.8"/><circle cx="118.45" cy="288.72" r="1.8"/><circle cx="121.3" cy="288.26" r="1.8"/><circle cx="124.15" cy="287.81" r="1.8"/><circle cx="127" cy="287.35" r="1.8"/><circle cx="129.85" cy="286.55" r="1.8"/><circle cx="132.7" cy="284.58" r="1.8"/><circle cx="135.55" cy="282.6" r="1.8"/><circle cx="138.4" cy="280.63" r="1.8"/><circle cx="141.25" cy="279.18" r="1.8"/><circle cx="144.1" cy="278.12" r="1.8"/><circle cx="146.95" cy="277.05" r="1.8"/><circle cx="149.8" cy="277.45" r="1.8"/><circle cx="152.65" cy="278.57" r="1.8"/><circle cx="155.5" cy="279.7" r="1.8"/><circle cx="158.35" cy="280.81" r="1.8"/><circle cx="161.2" cy="281.45" r="1.8"/><circle cx="164.05" cy="282.09" r="1.8"/><circle cx="166.9" cy="282.73" r="1.8"/><circle cx="169.75" cy="283.37" r="1.8"/><circle cx="172.6" cy="284.01" r="1.8"/><circle cx="175.45" cy="284.65" r="1.8"/><circle cx="178.3" cy="285.32" r="1.8"/><circle cx="181.15" cy="286.03" r="1.8"/><circle cx="184" cy="286.74" r="1.8"/><circle cx="186.85" cy="287.45" r="1.8"/><circle cx="189.7" cy="288.16" r="1.8"/><circle cx="192.55" cy="288.87" r="1.8"/><circle cx="195.4" cy="289.58" r="1.8"/><circle cx="198.25" cy="290.33" r="1.8"/><circle cx="201.1" cy="291.41" r="1.8"/><circle cx="203.95" cy="292.48" r="1.8"/><circle cx="206.8" cy="293.56" r="1.8"/><circle cx="209.65" cy="294.63" r="1.8"/><circle cx="212.5" cy="295.71" r="1.8"/><circle cx="215.35" cy="296.87" r="1.8"/><circle cx="218.2" cy="298.3" r="1.8"/><circle cx="221.05" cy="299.72" r="1.8"/><circle cx="223.9" cy="301.15" r="1.8"/><circle cx="226.75" cy="302.38" r="1.8"/><circle cx="229.6" cy="303.5" r="1.8"/><circle cx="232.45" cy="304.61" r="1.8"/><circle cx="235.3" cy="305.73" r="1.8"/><circle cx="238.15" cy="306.84" r="1.8"/><circle cx="241" cy="305.55" r="1.8"/><circle cx="243.85" cy="304.13" r="1.8"/><circle cx="246.7" cy="302.7" r="1.8"/><circle cx="249.55" cy="299.85" r="1.8"/><circle cx="252.4" cy="297" r="1.8"/><circle cx="255.25" cy="294.24" r="1.8"/><circle cx="258.1" cy="292.46" r="1.8"/><circle cx="260.95" cy="290.67" r="1.8"/><circle cx="263.8" cy="289.07" r="1.8"/><circle cx="266.65" cy="288.34" r="1.8"/><circle cx="269.5" cy="287.61" r="1.8"/><circle cx="272.35" cy="286.88" r="1.8"/><circle cx="275.2" cy="286.15" r="1.8"/><circle cx="278.05" cy="285.64" r="1.8"/><circle cx="280.9" cy="285.18" r="1.8"/><circle cx="283.75" cy="284.73" r="1.8"/><circle cx="286.6" cy="284.27" r="1.8"/><circle cx="289.45" cy="284.41" r="1.8"/><circle cx="292.3" cy="285.43" r="1.8"/><circle cx="295.15" cy="286.45" r="1.8"/><circle cx="298" cy="287.99" r="1.8"/><circle cx="300.85" cy="290.15" r="1.8"/><circle cx="303.7" cy="292.31" r="1.8"/><circle cx="306.55" cy="294.48" r="1.8"/><circle cx="309.4" cy="296.64" r="1.8"/><circle cx="312.25" cy="298.8" r="1.8"/><circle cx="315.1" cy="299.96" r="1.8"/><circle cx="317.95" cy="300.53" r="1.8"/><circle cx="320.8" cy="301.11" r="1.8"/><circle cx="323.65" cy="301.68" r="1.8"/><circle cx="326.5" cy="301.15" r="1.8"/><circle cx="329.35" cy="300.57" r="1.8"/><circle cx="332.2" cy="300" r="1.8"/><circle cx="335.05" cy="299.31" r="1.8"/><circle cx="337.9" cy="298.36" r="1.8"/><circle cx="340.75" cy="297.4" r="1.8"/><circle cx="343.6" cy="296.44" r="1.8"/><circle cx="346.45" cy="295.48" r="1.8"/><circle cx="349.3" cy="294.32" r="1.8"/><circle cx="352.15" cy="293.13" r="1.8"/><circle cx="355" cy="291.95" r="1.8"/><circle cx="357.85" cy="290.76" r="1.8"/><circle cx="360.7" cy="289.53" r="1.8"/><circle cx="363.55" cy="288.25" r="1.8"/><circle cx="366.4" cy="286.97" r="1.8"/><circle cx="369.25" cy="285.7" r="1.8"/><circle cx="372.1" cy="284.68" r="1.8"/><circle cx="374.95" cy="285.22" r="1.8"/><circle cx="377.8" cy="285.77" r="1.8"/><circle cx="380.65" cy="286.32" r="1.8"/><circle cx="383.5" cy="286.87" r="1.8"/><circle cx="386.35" cy="287.38" r="1.8"/><circle cx="389.2" cy="287.88" r="1.8"/><circle cx="392.05" cy="288.38" r="1.8"/><circle cx="394.9" cy="288.88" r="1.8"/><circle cx="397.75" cy="289.54" r="1.8"/><circle cx="400.6" cy="290.48" r="1.8"/><circle cx="403.45" cy="291.41" r="1.8"/><circle cx="406.3" cy="292.35" r="1.8"/><circle cx="409.15" cy="293.28" r="1.8"/><circle cx="412" cy="292.78" r="1.8"/><circle cx="414.85" cy="292.26" r="1.8"/><circle cx="417.7" cy="291.74" r="1.8"/><circle cx="420.55" cy="291.21" r="1.8"/><circle cx="423.4" cy="291.18" r="1.8"/><circle cx="426.25" cy="291.47" r="1.8"/><circle cx="429.1" cy="291.77" r="1.8"/><circle cx="431.95" cy="292.07" r="1.8"/><circle cx="434.8" cy="292.54" r="1.8"/><circle cx="437.65" cy="293.69" r="1.8"/><circle cx="440.5" cy="294.84" r="1.8"/><circle cx="443.35" cy="296" r="1.8"/><circle cx="446.2" cy="296.33" r="1.8"/><circle cx="449.05" cy="296.03" r="1.8"/><circle cx="451.9" cy="295.73" r="1.8"/><circle cx="454.75" cy="295.43" r="1.8"/><circle cx="457.6" cy="295.13" r="1.8"/><circle cx="460.45" cy="294.83" r="1.8"/><circle cx="463.3" cy="294.53" r="1.8"/><circle cx="466.15" cy="294.23" r="1.8"/><circle cx="469" cy="294.07" r="1.8"/><circle cx="471.85" cy="294.34" r="1.8"/><circle cx="474.7" cy="294.61" r="1.8"/><circle cx="477.55" cy="294.89" r="1.8"/><circle cx="480.4" cy="295.41" r="1.8"/><circle cx="483.25" cy="296.12" r="1.8"/><circle cx="486.1" cy="296.82" r="1.8"/><circle cx="488.95" cy="297.53" r="1.8"/><circle cx="491.8" cy="298.19" r="1.8"/><circle cx="494.65" cy="298.68" r="1.8"/><circle cx="497.5" cy="299.17" r="1.8"/><circle cx="500.35" cy="299.66" r="1.8"/><circle cx="503.2" cy="300.15" r="1.8"/><circle cx="506.05" cy="300.66" r="1.8"/><circle cx="508.9" cy="301.38" r="1.8"/><circle cx="511.75" cy="302.1" r="1.8"/><circle cx="514.6" cy="302.81" r="1.8"/><circle cx="517.45" cy="303.53" r="1.8"/><circle cx="520.3" cy="304.25" r="1.8"/><circle cx="523.15" cy="304.73" r="1.8"/><circle cx="526" cy="304.45" r="1.8"/><circle cx="528.85" cy="304.16" r="1.8"/><circle cx="531.7" cy="303.87" r="1.8"/><circle cx="534.55" cy="302.92" r="1.8"/><circle cx="537.4" cy="301.48" r="1.8"/><circle cx="540.25" cy="300.04" r="1.8"/><circle cx="543.1" cy="298.6" r="1.8"/><circle cx="545.95" cy="297.65" r="1.8"/><circle cx="548.8" cy="296.73" r="1.8"/><circle cx="551.65" cy="295.82" r="1.8"/><circle cx="554.5" cy="294.78" r="1.8"/><circle cx="557.35" cy="293.74" r="1.8"/><circle cx="560.2" cy="292.71" r="1.8"/><circle cx="563.05" cy="291.67" r="1.8"/><circle cx="565.9" cy="290.63" r="1.8"/><circle cx="568.75" cy="289.59" r="1.8"/><circle cx="571.6" cy="288.56" r="1.8"/><circle cx="574.45" cy="287.52" r="1.8"/><circle cx="577.3" cy="286.47" r="1.8"/><circle cx="580.15" cy="285.38" r="1.8"/><circle cx="583" cy="284.28" r="1.8"/><circle cx="585.85" cy="283.19" r="1.8"/><circle cx="588.7" cy="282.09" r="1.8"/><circle cx="591.55" cy="281.22" r="1.8"/><circle cx="594.4" cy="280.4" r="1.8"/><circle cx="597.25" cy="279.58" r="1.8"/><circle cx="600.1" cy="278.76" r="1.8"/><circle cx="602.95" cy="278.45" r="1.8"/><circle cx="605.8" cy="278.79" r="1.8"/><circle cx="608.65" cy="279.13" r="1.8"/><circle cx="611.5" cy="279.48" r="1.8"/><circle cx="614.35" cy="279.86" r="1.8"/><circle cx="617.2" cy="281.05" r="1.8"/><circle cx="620.05" cy="282.23" r="1.8"/><circle cx="622.9" cy="283.42" r="1.8"/><circle cx="625.75" cy="284.6" r="1.8"/><circle cx="628.6" cy="285.09" r="1.8"/><circle cx="631.45" cy="285.23" r="1.8"/><circle cx="634.3" cy="285.37" r="1.8"/><circle cx="637.15" cy="284.61" r="1.8"/><circle cx="640" cy="283.56" r="1.8"/><circle cx="642.85" cy="282.51" r="1.8"/><circle cx="645.7" cy="281.46" r="1.8"/><circle cx="648.55" cy="280.64" r="1.8"/><circle cx="651.4" cy="280.2" r="1.8"/><circle cx="654.25" cy="279.76" r="1.8"/><circle cx="657.1" cy="279.32" r="1.8"/><circle cx="659.95" cy="279.44" r="1.8"/><circle cx="662.8" cy="279.77" r="1.8"/><circle cx="665.65" cy="280.09" r="1.8"/><circle cx="668.5" cy="280.49" r="1.8"/><circle cx="671.35" cy="281.74" r="1.8"/><circle cx="674.2" cy="283" r="1.8"/><circle cx="677.05" cy="284.25" r="1.8"/><circle cx="679.9" cy="285.52" r="1.8"/><circle cx="682.75" cy="286.81" r="1.8"/><circle cx="685.6" cy="288.11" r="1.8"/><circle cx="688.45" cy="289.4" r="1.8"/><circle cx="691.3" cy="289.5" r="1.8"/><circle cx="694.15" cy="288.2" r="1.8"/><circle cx="697" cy="286.89" r="1.8"/><circle cx="699.85" cy="285.58" r="1.8"/><circle cx="702.7" cy="284.2" r="1.8"/><circle cx="705.55" cy="282.77" r="1.8"/><circle cx="708.4" cy="281.35" r="1.8"/><circle cx="711.25" cy="279.92" r="1.8"/><circle cx="714.1" cy="279.09" r="1.8"/><circle cx="716.95" cy="278.37" r="1.8"/><circle cx="719.8" cy="277.64" r="1.8"/><circle cx="722.65" cy="276.92" r="1.8"/><circle cx="725.5" cy="276.29" r="1.8"/><circle cx="728.35" cy="275.88" r="1.8"/><circle cx="731.2" cy="275.47" r="1.8"/><circle cx="734.05" cy="275.06" r="1.8"/><circle cx="736.9" cy="274.66" r="1.8"/><circle cx="739.75" cy="274.25" r="1.8"/><circle cx="742.6" cy="273.84" r="1.8"/><circle cx="745.45" cy="273.21" r="1.8"/><circle cx="748.3" cy="272.23" r="1.8"/><circle cx="751.15" cy="271.25" r="1.8"/><circle cx="754" cy="270.28" r="1.8"/><circle cx="756.85" cy="269.9" r="1.8"/><circle cx="759.7" cy="269.9" r="1.8"/><circle cx="762.55" cy="269.9" r="1.8"/><circle cx="765.4" cy="269.9" r="1.8"/><circle cx="768.25" cy="270.36" r="1.8"/><circle cx="771.1" cy="270.94" r="1.8"/><circle cx="773.95" cy="271.52" r="1.8"/><circle cx="776.8" cy="272.1" r="1.8"/><circle cx="779.65" cy="275.43" r="1.8"/><circle cx="782.5" cy="278.76" r="1.8"/><circle cx="785.35" cy="282.76" r="1.8"/><circle cx="788.2" cy="287.02" r="1.8"/><circle cx="791.05" cy="291.28" r="1.8"/><circle cx="793.9" cy="294.84" r="1.8"/><circle cx="796.75" cy="298.05" r="1.8"/><circle cx="799.6" cy="301.26" r="1.8"/><circle cx="802.45" cy="303.72" r="1.8"/><circle cx="805.3" cy="305.69" r="1.8"/><circle cx="808.15" cy="307.67" r="1.8"/><circle cx="811" cy="309.65" r="1.8"/><circle cx="813.85" cy="310.99" r="1.8"/><circle cx="816.7" cy="312.2" r="1.8"/><circle cx="819.55" cy="313.41" r="1.8"/><circle cx="822.4" cy="314.61" r="1.8"/><circle cx="825.25" cy="315.45" r="1.8"/><circle cx="828.1" cy="315.25" r="1.8"/><circle cx="830.95" cy="315.06" r="1.8"/><circle cx="833.8" cy="314.72" r="1.8"/><circle cx="836.65" cy="313.87" r="1.8"/><circle cx="839.5" cy="313.02" r="1.8"/></g>
</g>
<rect x="12" y="266" width="31" height="12" fill="#3a4049"/>
<text x="13.2" y="276.9" font-size="10.8" fill="#1a2070" textLength="28.8" lengthAdjust="spacingAndGlyphs" stroke="#1a2070" stroke-width="0.35">MACD</text>
<text x="893" y="277.8" font-size="10.8" fill="#f4f4f4" textLength="33.3" lengthAdjust="spacingAndGlyphs" stroke="#f4f4f4" stroke-width="0.35">+0.005</text>
<text x="893" y="304.8" font-size="10.8" fill="#f4f4f4" textLength="33.3" lengthAdjust="spacingAndGlyphs" stroke="#f4f4f4" stroke-width="0.35">+0.000</text>
<g clip-path="url(#crsi)">
<polygon points="11.5,360.4 16.7,363.5 20.8,370.8 24,379 28,386 33,382 36.5,370.8 38.5,369.8 43.75,376 46.9,372.5 50,374 54.2,381.25 60.4,375 66.7,369.8 68.75,360.4 72.9,359.4 80.2,351 85.4,359.4 91.7,360.4 97.9,379 104.2,370.8 108.3,367.7 112.5,366.7 116.7,368.75 120.8,362.5 125,359.4 129.2,352 133.3,348 137.5,342.7 140.6,341.7 143.75,350 146.9,372.9 154.2,367.7 158.3,371.9 162.5,363.5 167.7,359.4 172.9,364.6 179.2,369.8 183.3,364.6 187.5,368.75 193.75,368.75 196.9,378 204.2,378 210.4,368.75 216.7,382.3 220.8,387.5 226,391.7 229.2,381.25 237.3,380.2 242.5,362.5 248.75,350 257.1,345.8 262.3,364.6 266.5,362.5 269.6,360.4 272.7,358.3 276.9,364.6 280,354.2 285.2,356.25 290.4,366.7 296.7,381.25 302.9,386.5 307.1,394.8 311.25,379.2 317.5,371.9 323.75,370.8 330,363.5 336.25,359.4 340.4,351 344.6,358.3 348.75,361.5 352.9,356.25 356,343.75 360.2,351 364.4,345.8 369.6,354.2 376.9,374 380,366.7 384.2,366.7 388.3,362.5 394.6,374 400.8,375 407.1,383.3 411.25,364.6 415.4,354.2 419.6,354.2 423.75,358.3 425.8,368.75 432.1,375 438.3,386.5 444.6,361.5 450.8,366.7 456,372.9 459.2,363.5 464.2,371.9 470.4,363.5 474.6,369.8 478.75,379.2 484,378 489.2,370.8 493.3,380.2 499.6,377 505.8,379.2 511,379.2 520,381 524.6,371.9 530.8,366.7 536,368.75 539.2,363.5 542.3,363.5 547.5,355.2 552.7,360.4 557.9,370.8 562.1,359.4 568.3,353.1 574.6,351 579.8,344.8 585,343.75 589.2,337.5 593.3,345.8 598.5,352 602.7,350 605.8,359.4 612.1,362.5 622.5,375 627.7,356.25 632.9,353.1 639.2,345.8 643.3,344.8 647.5,347.9 651.7,342.7 655.8,347.9 660,356.25 663.1,357.3 666.25,370.8 670.4,363.5 672.5,364.6 676.7,379.2 680.8,371.9 685,378 689.2,356.25 694.3,352.1 700.9,350 705.2,346.7 709.5,343.4 712.8,348.9 716,346.7 721.5,357.6 726.9,346.7 730.1,347.8 735.6,345.6 741,347.8 746.4,341.3 755.1,333.7 757.3,346.7 760.5,358.6 763.8,353.2 770.3,347.8 773.5,351 776.8,368.4 780.1,388 785.5,394.4 793.1,395.5 798.5,383.6 805,380 812,386 818,397 822,392 826.7,376 831.1,374.9 835.4,377.1 839.7,376 839.7,399 11.5,399" fill="url(#rsif)"/>
<line x1="12" y1="345" x2="840" y2="345" stroke="#1818a8" stroke-width="2"/>
<line x1="12" y1="398.8" x2="840" y2="398.8" stroke="#1818a8" stroke-width="2"/>
<polyline points="11.5,360.4 16.7,363.5 20.8,370.8 24,379 28,386 33,382 36.5,370.8 38.5,369.8 43.75,376 46.9,372.5 50,374 54.2,381.25 60.4,375 66.7,369.8 68.75,360.4 72.9,359.4 80.2,351 85.4,359.4 91.7,360.4 97.9,379 104.2,370.8 108.3,367.7 112.5,366.7 116.7,368.75 120.8,362.5 125,359.4 129.2,352 133.3,348 137.5,342.7 140.6,341.7 143.75,350 146.9,372.9 154.2,367.7 158.3,371.9 162.5,363.5 167.7,359.4 172.9,364.6 179.2,369.8 183.3,364.6 187.5,368.75 193.75,368.75 196.9,378 204.2,378 210.4,368.75 216.7,382.3 220.8,387.5 226,391.7 229.2,381.25 237.3,380.2 242.5,362.5 248.75,350 257.1,345.8 262.3,364.6 266.5,362.5 269.6,360.4 272.7,358.3 276.9,364.6 280,354.2 285.2,356.25 290.4,366.7 296.7,381.25 302.9,386.5 307.1,394.8 311.25,379.2 317.5,371.9 323.75,370.8 330,363.5 336.25,359.4 340.4,351 344.6,358.3 348.75,361.5 352.9,356.25 356,343.75 360.2,351 364.4,345.8 369.6,354.2 376.9,374 380,366.7 384.2,366.7 388.3,362.5 394.6,374 400.8,375 407.1,383.3 411.25,364.6 415.4,354.2 419.6,354.2 423.75,358.3 425.8,368.75 432.1,375 438.3,386.5 444.6,361.5 450.8,366.7 456,372.9 459.2,363.5 464.2,371.9 470.4,363.5 474.6,369.8 478.75,379.2 484,378 489.2,370.8 493.3,380.2 499.6,377 505.8,379.2 511,379.2 520,381 524.6,371.9 530.8,366.7 536,368.75 539.2,363.5 542.3,363.5 547.5,355.2 552.7,360.4 557.9,370.8 562.1,359.4 568.3,353.1 574.6,351 579.8,344.8 585,343.75 589.2,337.5 593.3,345.8 598.5,352 602.7,350 605.8,359.4 612.1,362.5 622.5,375 627.7,356.25 632.9,353.1 639.2,345.8 643.3,344.8 647.5,347.9 651.7,342.7 655.8,347.9 660,356.25 663.1,357.3 666.25,370.8 670.4,363.5 672.5,364.6 676.7,379.2 680.8,371.9 685,378 689.2,356.25 694.3,352.1 700.9,350 705.2,346.7 709.5,343.4 712.8,348.9 716,346.7 721.5,357.6 726.9,346.7 730.1,347.8 735.6,345.6 741,347.8 746.4,341.3 755.1,333.7 757.3,346.7 760.5,358.6 763.8,353.2 770.3,347.8 773.5,351 776.8,368.4 780.1,388 785.5,394.4 793.1,395.5 798.5,383.6 805,380 812,386 818,397 822,392 826.7,376 831.1,374.9 835.4,377.1 839.7,376" fill="none" stroke="#f29030" stroke-width="1.1" stroke-linejoin="round"/>
<polyline points="11.5,360.4 16.7,363.5 20.8,370.8 24,379 28,386 33,382 36.5,370.8 38.5,369.8 43.75,376 46.9,372.5 50,374 54.2,381.25 60.4,375 66.7,369.8 68.75,360.4 72.9,359.4 80.2,351 85.4,359.4 91.7,360.4 97.9,379 104.2,370.8 108.3,367.7 112.5,366.7 116.7,368.75 120.8,362.5 125,359.4 129.2,352 133.3,348 137.5,342.7 140.6,341.7 143.75,350 146.9,372.9 154.2,367.7 158.3,371.9 162.5,363.5 167.7,359.4 172.9,364.6 179.2,369.8 183.3,364.6 187.5,368.75 193.75,368.75 196.9,378 204.2,378 210.4,368.75 216.7,382.3 220.8,387.5 226,391.7 229.2,381.25 237.3,380.2 242.5,362.5 248.75,350 257.1,345.8 262.3,364.6 266.5,362.5 269.6,360.4 272.7,358.3 276.9,364.6 280,354.2 285.2,356.25 290.4,366.7 296.7,381.25 302.9,386.5 307.1,394.8 311.25,379.2 317.5,371.9 323.75,370.8 330,363.5 336.25,359.4 340.4,351 344.6,358.3 348.75,361.5 352.9,356.25 356,343.75 360.2,351 364.4,345.8 369.6,354.2 376.9,374 380,366.7 384.2,366.7 388.3,362.5 394.6,374 400.8,375 407.1,383.3 411.25,364.6 415.4,354.2 419.6,354.2 423.75,358.3 425.8,368.75 432.1,375 438.3,386.5 444.6,361.5 450.8,366.7 456,372.9 459.2,363.5 464.2,371.9 470.4,363.5 474.6,369.8 478.75,379.2 484,378 489.2,370.8 493.3,380.2 499.6,377 505.8,379.2 511,379.2 520,381 524.6,371.9 530.8,366.7 536,368.75 539.2,363.5 542.3,363.5 547.5,355.2 552.7,360.4 557.9,370.8 562.1,359.4 568.3,353.1 574.6,351 579.8,344.8 585,343.75 589.2,337.5 593.3,345.8 598.5,352 602.7,350 605.8,359.4 612.1,362.5 622.5,375 627.7,356.25 632.9,353.1 639.2,345.8 643.3,344.8 647.5,347.9 651.7,342.7 655.8,347.9 660,356.25 663.1,357.3 666.25,370.8 670.4,363.5 672.5,364.6 676.7,379.2 680.8,371.9 685,378 689.2,356.25 694.3,352.1 700.9,350 705.2,346.7 709.5,343.4 712.8,348.9 716,346.7 721.5,357.6 726.9,346.7 730.1,347.8 735.6,345.6 741,347.8 746.4,341.3 755.1,333.7 757.3,346.7 760.5,358.6 763.8,353.2 770.3,347.8 773.5,351 776.8,368.4 780.1,388 785.5,394.4 793.1,395.5 798.5,383.6 805,380 812,386 818,397 822,392 826.7,376 831.1,374.9 835.4,377.1 839.7,376" fill="none" stroke="#c040d8" stroke-width="1.1" clip-path="url(#cabove)"/>
</g>
<rect x="12" y="331" width="17" height="12" fill="#3a4049"/>
<text x="13.4" y="341.7" font-size="10.8" fill="#f08a30" textLength="14.6" lengthAdjust="spacingAndGlyphs" stroke="#f08a30" stroke-width="0.35">RSI</text>
<text x="891.8" y="365" font-size="10.8" fill="#f4f4f4" textLength="11.8" lengthAdjust="spacingAndGlyphs" stroke="#f4f4f4" stroke-width="0.35">60</text>
<text x="891.8" y="392" font-size="10.8" fill="#f4f4f4" textLength="11.8" lengthAdjust="spacingAndGlyphs" stroke="#f4f4f4" stroke-width="0.35">40</text>
<line x1="24.5" y1="403.5" x2="24.5" y2="407" stroke="#aabbca"/>
<line x1="91.5" y1="403.5" x2="91.5" y2="407" stroke="#aabbca"/>
<line x1="218.5" y1="403.5" x2="218.5" y2="407" stroke="#aabbca"/>
<line x1="301.5" y1="403.5" x2="301.5" y2="407" stroke="#aabbca"/>
<line x1="384.5" y1="403.5" x2="384.5" y2="407" stroke="#aabbca"/>
<line x1="550.5" y1="403.5" x2="550.5" y2="407" stroke="#aabbca"/>
<line x1="633.5" y1="403.5" x2="633.5" y2="407" stroke="#aabbca"/>
<line x1="716.5" y1="403.5" x2="716.5" y2="407" stroke="#aabbca"/>
<path d="M12 380.6 H70 L72 382.6 V397.4 L70 399.4 H12 Z" fill="#5b6b82" stroke="#c4d6e2" stroke-width="1.2"/>
<rect x="11.5" y="380" width="2" height="27" fill="#d8e6ee"/>
<text x="18.9" y="394" font-size="10.8" fill="#f4f6f8" textLength="46.4" lengthAdjust="spacingAndGlyphs" stroke="#f4f6f8" stroke-width="0.15">Дек 2020</text>
<path d="M135.5 380.6 H195 L197 382.6 V397.4 L195 399.4 H135.5 Z" fill="#5b6b82" stroke="#c4d6e2" stroke-width="1.2"/>
<rect x="135" y="380" width="2" height="27" fill="#d8e6ee"/>
<text x="143.4" y="394" font-size="10.8" fill="#f4f6f8" textLength="45.5" lengthAdjust="spacingAndGlyphs" stroke="#f4f6f8" stroke-width="0.15">Янв 2021</text>
<path d="M467.5 380.6 H527.5 L529.5 382.6 V397.4 L527.5 399.4 H467.5 Z" fill="#5b6b82" stroke="#c4d6e2" stroke-width="1.2"/>
<rect x="467" y="380" width="2" height="27" fill="#d8e6ee"/>
<text x="476.2" y="394" font-size="10.8" fill="#f4f6f8" textLength="44.8" lengthAdjust="spacingAndGlyphs" stroke="#f4f6f8" stroke-width="0.15">Фев 2021</text>
<path d="M799.5 380.6 H860.5 L862.5 382.6 V397.4 L860.5 399.4 H799.5 Z" fill="#5b6b82" stroke="#c4d6e2" stroke-width="1.2"/>
<rect x="799" y="380" width="2" height="27" fill="#d8e6ee"/>
<text x="807.2" y="394" font-size="10.8" fill="#f4f6f8" textLength="48.8" lengthAdjust="spacingAndGlyphs" stroke="#f4f6f8" stroke-width="0.15">Мар 2021</text>
<text x="17.9" y="426" font-size="10.8" fill="#f4f4f4" textLength="11.2" lengthAdjust="spacingAndGlyphs" stroke="#f4f4f4" stroke-width="0.35">21</text>
<text x="85.1" y="426" font-size="10.8" fill="#f4f4f4" textLength="11.2" lengthAdjust="spacingAndGlyphs" stroke="#f4f4f4" stroke-width="0.35">28</text>
<text x="131.9" y="426" font-size="10.8" fill="#f4f4f4" textLength="5.4" lengthAdjust="spacingAndGlyphs" stroke="#f4f4f4" stroke-width="0.35">4</text>
<text x="212.1" y="426" font-size="10.8" fill="#f4f4f4" textLength="11.2" lengthAdjust="spacingAndGlyphs" stroke="#f4f4f4" stroke-width="0.35">11</text>
<text x="295.3" y="426" font-size="10.8" fill="#f4f4f4" textLength="11.2" lengthAdjust="spacingAndGlyphs" stroke="#f4f4f4" stroke-width="0.35">18</text>
<text x="378.1" y="426" font-size="10.8" fill="#f4f4f4" textLength="11.2" lengthAdjust="spacingAndGlyphs" stroke="#f4f4f4" stroke-width="0.35">25</text>
<text x="463.7" y="426" font-size="10.8" fill="#f4f4f4" textLength="5.4" lengthAdjust="spacingAndGlyphs" stroke="#f4f4f4" stroke-width="0.35">1</text>
<text x="546.8" y="426" font-size="10.8" fill="#f4f4f4" textLength="5.4" lengthAdjust="spacingAndGlyphs" stroke="#f4f4f4" stroke-width="0.35">8</text>
<text x="626.8" y="426" font-size="10.8" fill="#f4f4f4" textLength="11.2" lengthAdjust="spacingAndGlyphs" stroke="#f4f4f4" stroke-width="0.35">15</text>
<text x="709.9" y="426" font-size="10.8" fill="#f4f4f4" textLength="11.2" lengthAdjust="spacingAndGlyphs" stroke="#f4f4f4" stroke-width="0.35">22</text>
<text x="795.8" y="426" font-size="10.8" fill="#f4f4f4" textLength="5.4" lengthAdjust="spacingAndGlyphs" stroke="#f4f4f4" stroke-width="0.35">1</text>
</svg></body></html>
